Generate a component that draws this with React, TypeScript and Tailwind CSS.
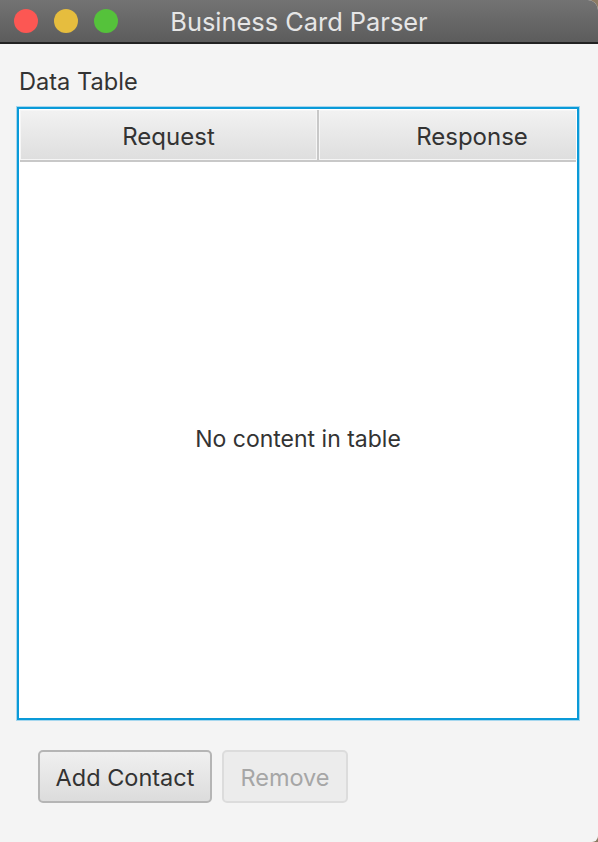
export default function App() {
  const font = { fontFamily: 'Inter, "Noto Sans", sans-serif' };
  return (
    <div className="w-[598px] h-[842px] bg-[#8c7b63] overflow-hidden" style={font}>
      <div className="w-[598px] h-[842px] flex flex-col bg-[#f4f4f4] rounded-tr-[10px] rounded-br-[6px] overflow-hidden">
        <div className="h-[44px] shrink-0 grid grid-cols-[1fr_auto_1fr] items-center bg-gradient-to-b from-[#737373] to-[#5c5c5c] border-b-2 border-[#222222]">
          <div className="flex items-center gap-[16px] pl-[14px]">
            <span className="w-[24px] h-[24px] rounded-full bg-[#fc5753]" />
            <span className="w-[24px] h-[24px] rounded-full bg-[#e6bd3e]" />
            <span className="w-[24px] h-[24px] rounded-full bg-[#55c23b]" />
          </div>
          <div className="text-[25.4px] text-[#e6e6e6] leading-none pt-[1px]">Business Card Parser</div>
          <div />
        </div>
        <div className="flex flex-col pl-[17px]">
          <div className="mt-[24px] pl-[2px] text-[23.6px] leading-[28px] text-[#333333]">Data Table</div>
          <div className="mt-[11px] w-[562px] h-[613px] border-2 border-[#0a9ad8] shadow-[0_0_0_1px_#a6d7ee] bg-white p-[1px] flex flex-col overflow-hidden">
            <div className="h-[52px] shrink-0 flex border-b-2 border-[#c8c8c8] bg-gradient-to-b from-[#f2f2f2] to-[#dedede]">
              <div className="w-[297px] shrink-0 flex items-center justify-center pt-[3px] border border-[#f6f6f6] text-[24px] text-[#333333]">Request</div>
              <div className="w-[2px] shrink-0 bg-[#c8c8c8]" />
              <div className="w-[306px] shrink-0 flex items-center justify-center pt-[3px] border border-[#f6f6f6] text-[24px] text-[#333333]">Response</div>
            </div>
            <div className="flex-1 flex items-center justify-center text-[23px] text-[#333333]">No content in table</div>
          </div>
          <div className="mt-[30px] pl-[21px] flex gap-[10px]">
            <button className="w-[174px] h-[53px] rounded-[5px] border-2 border-[#b5b5b5] bg-gradient-to-b from-[#f0f0f0] to-[#dcdcdc] text-[23.5px] text-[#333333] pt-[2px]">Add Contact</button>
            <button className="w-[126px] h-[53px] rounded-[5px] border-2 border-[#dcdcdc] bg-[#ececec] text-[23.5px] text-[#a6a6a6] pt-[2px]">Remove</button>
          </div>
        </div>
      </div>
    </div>
  );
}
